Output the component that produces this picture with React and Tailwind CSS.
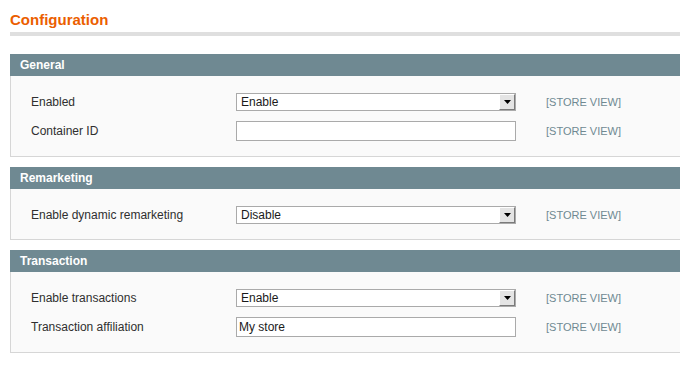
const sections = [
  {
    title: "General",
    rows: [
      { label: "Enabled", type: "select", value: "Enable" },
      { label: "Container ID", type: "input", value: "" },
    ],
  },
  {
    title: "Remarketing",
    rows: [{ label: "Enable dynamic remarketing", type: "select", value: "Disable" }],
  },
  {
    title: "Transaction",
    rows: [
      { label: "Enable transactions", type: "select", value: "Enable" },
      { label: "Transaction affiliation", type: "input", value: "My store" },
    ],
  },
]

const SelectBox = ({ value }) => (
  <div className="flex h-[18px] w-[280px] items-stretch border border-[#aaaaaa] bg-white">
    <span className="flex-1 pl-[4px] text-[12px] leading-[16px] text-[#1a1a1a]">{value}</span>
    <span className="flex w-[16px] items-center justify-center border-t border-l border-t-white border-l-white border-r border-b border-r-[#7a7a7a] border-b-[#7a7a7a] bg-[#e4e4e4]">
      <svg width="7" height="4" viewBox="0 0 7 4">
        <path d="M0 0h7L3.5 4z" fill="#000" />
      </svg>
    </span>
  </div>
)

const InputBox = ({ value }) => (
  <div className="h-[20px] w-[280px] border border-[#aaaaaa] bg-white pl-[2px] text-[12px] leading-[18px] text-[#1a1a1a]">
    {value}
  </div>
)

const Section = ({ title, rows }) => (
  <div className="mb-[10px] w-[700px]">
    <div className="h-[22px] bg-[#6f8992] pl-[10px] text-[12px] font-bold leading-[22px] text-white">
      {title}
    </div>
    <div className="flex flex-col gap-[10px] border border-t-0 border-[#d6d6d6] bg-[#fafafa] pt-[17px] pb-[15px] pl-[20px]">
      {rows.map((row) => (
        <div key={row.label} className="flex items-center">
          <span className="w-[205px] text-[12px] text-[#2f2f2f]">{row.label}</span>
          {row.type === "select" ? <SelectBox value={row.value} /> : <InputBox value={row.value} />}
          <span className="ml-[30px] text-[11px] text-[#6f8992]">[STORE VIEW]</span>
        </div>
      ))}
    </div>
  </div>
)

export default function App() {
  return (
    <div className="h-[372px] w-full overflow-hidden bg-white font-['Liberation_Sans',Arial,sans-serif]">
      <div className="pt-[11px] pl-[10px]">
        <h3 className="text-[15px] font-bold leading-[18px] text-[#eb5e00]">Configuration</h3>
        <div className="mt-[3px] mb-[18px] h-[4px] w-[700px] bg-[#dfdfdf]" />
        {sections.map((s) => (
          <Section key={s.title} title={s.title} rows={s.rows} />
        ))}
      </div>
    </div>
  )
}
